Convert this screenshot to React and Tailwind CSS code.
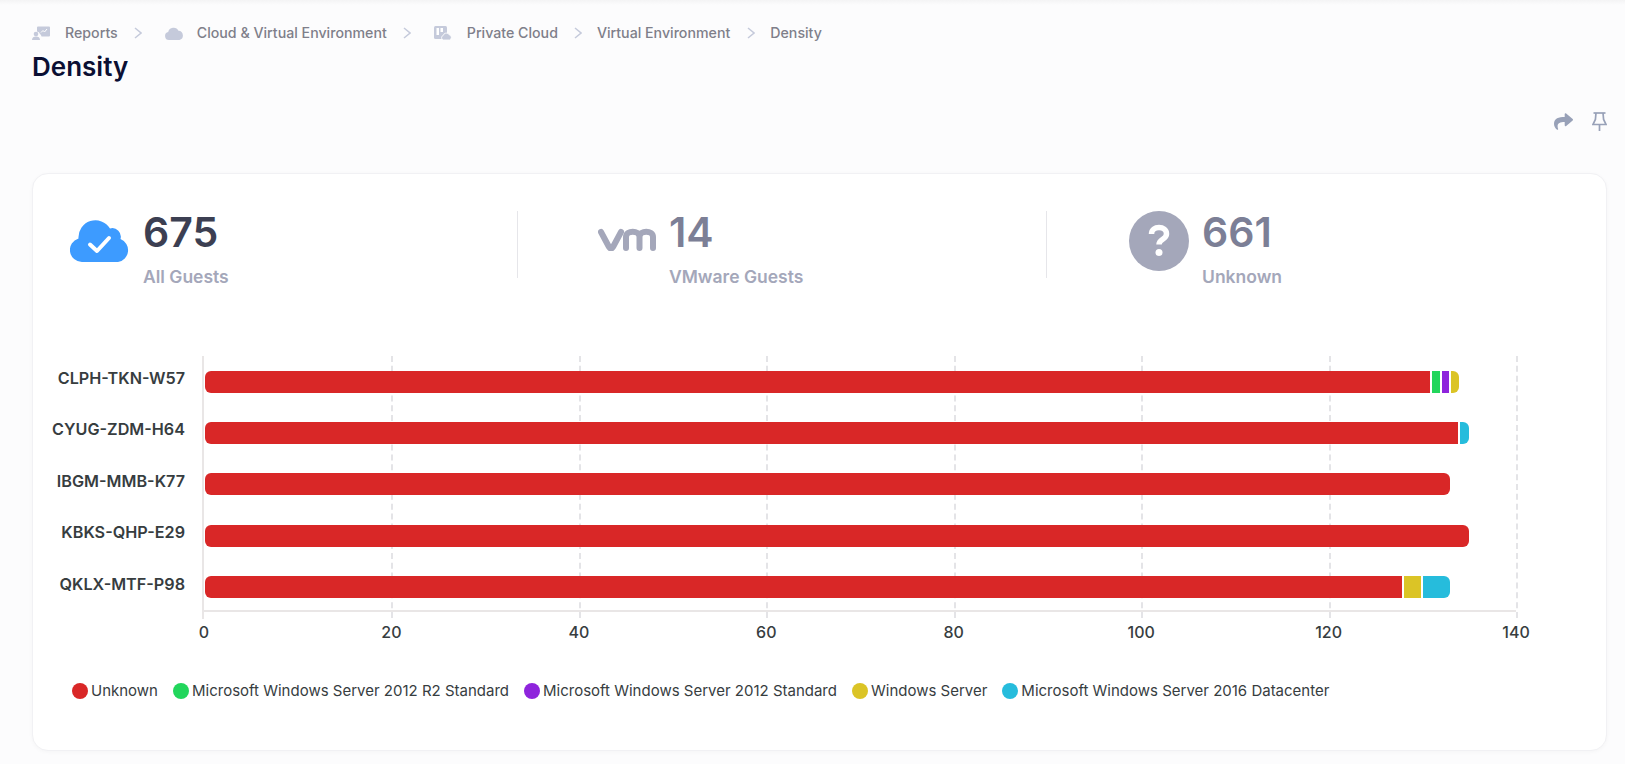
import { FaShare } from "react-icons/fa";

const COLORS = {
  unknown: "#d92727",
  r2: "#22d65c",
  std: "#8e24dc",
  win: "#dbc426",
  dc: "#26bcdc",
};

const ROWS = [
  { name: "CLPH-TKN-W57", parts: [["unknown", 131], ["r2", 1], ["std", 1], ["win", 1]] },
  { name: "CYUG-ZDM-H64", parts: [["unknown", 134], ["dc", 1]] },
  { name: "IBGM-MMB-K77", parts: [["unknown", 133]] },
  { name: "KBKS-QHP-E29", parts: [["unknown", 135]] },
  { name: "QKLX-MTF-P98", parts: [["unknown", 128], ["win", 2], ["dc", 3]] },
];

const TICKS = [0, 20, 40, 60, 80, 100, 120, 140];

const LEGEND = [
  ["unknown", "Unknown"],
  ["r2", "Microsoft Windows Server 2012 R2 Standard"],
  ["std", "Microsoft Windows Server 2012 Standard"],
  ["win", "Windows Server"],
  ["dc", "Microsoft Windows Server 2016 Datacenter"],
];

const ReportsIcon = () => (
  <svg width="18" height="14" viewBox="0 0 18 14" fill="none">
    <path d="M5 1.500A1 1 0 0 1 6 .5h11a1 1 0 0 1 1 1v8a1 1 0 0 1-1 1H9.500a4 4 0 0 0-1.500-2.500A3.500 3.500 0 0 0 5 5.500z" fill="#c5cadb" />
    <path d="M9 6.500l2-2 1.500 1.500 2.500-3" stroke="#fff" strokeWidth="1" />
    <circle cx="4" cy="8" r="2.300" fill="#c5cadb" />
    <path d="M0 14c0-2.400 1.600-3.500 4-3.500s4 1.100 4 3.500z" fill="#c5cadb" />
  </svg>
);

const CloudIcon = () => (
  <svg width="18" height="13" viewBox="0 0 18 13" fill="#c5cadb">
    <path d="M4 13a4 4 0 0 1-.8-7.900A5.500 5.500 0 0 1 13.500 3.800 4.700 4.700 0 0 1 14.500 13z" />
  </svg>
);

const PrivateIcon = () => (
  <svg width="18" height="14" viewBox="0 0 18 14">
    <rect x="0" y="0" width="13" height="13" rx="1.500" fill="#c5cadb" />
    <rect x="2.500" y="2" width="2.500" height="7" fill="#fff" />
    <rect x="6.500" y="2" width="2.500" height="4" fill="#fff" />
    <path d="M9.500 14a2.300 2.300 0 0 1-.3-4.500 3.200 3.200 0 0 1 6-.7A2.700 2.700 0 0 1 15.500 14z" fill="#c5cadb" stroke="#fff" strokeWidth="0.800" />
  </svg>
);

const Chevron = () => (
  <svg width="8" height="12" viewBox="0 0 8 12" fill="none" stroke="#c5cadb" strokeWidth="1.500">
    <path d="M1 1l6 5-6 5" />
  </svg>
);

const PinIcon = () => (
  <svg width="15" height="19" viewBox="0 0 15 19" fill="none" stroke="#98a1b8" strokeWidth="1.700">
    <path d="M1.500 1h12" />
    <path d="M4 1l-.6 6.500L.9 12.500h13.200l-2.500-5L11 1" />
    <path d="M7.500 12.500V19" />
  </svg>
);

const CloudCheck = () => (
  <svg width="60" height="42" viewBox="0 0 60 42">
    <path d="M12 42A12 12 0 0 1 8.500 18.500 17 17 0 0 1 40 8.500 8.500 8.500 0 0 1 50.500 19 12 12 0 0 1 48 42z" fill="#3d9bff" />
    <path d="M20 24.500l7 6.500 12-13" fill="none" stroke="#fff" strokeWidth="4" strokeLinecap="round" strokeLinejoin="round" />
  </svg>
);

const VmLogo = () => (
  <svg width="58" height="24" viewBox="0 0 58 24" fill="none" stroke="#a4a7ba" strokeWidth="6" strokeLinecap="round">
    <path d="M3 5l8 15c1 2 3 2 4 0l8-15" />
    <path d="M28 21V10C28 3 41.500 3 41.500 10V21M41.500 10C41.500 3 55 3 55 10V21" />
  </svg>
);

const QuestionIcon = () => (
  <svg width="60" height="60" viewBox="0 0 60 60">
    <circle cx="30" cy="30" r="30" fill="#a4a7ba" />
    <path d="M22.500 23c0-4.500 3.500-6.500 7.500-6.500s7.500 2.500 7.500 6.500c0 5.500-7.500 5-7.500 10.500" fill="none" stroke="#fff" strokeWidth="5.500" />
    <circle cx="30" cy="41.500" r="3.500" fill="#fff" />
  </svg>
);

const Stat = ({ icon, value, label, valueClass, gap, className }) => (
  <div className={`flex h-[67px] ${className}`}>
    <div className={`flex items-center justify-end ${gap}`}>{icon}</div>
    <div>
      <div className={`text-[41px] leading-[42px] font-semibold ${valueClass}`}>{value}</div>
      <div className="text-[17.500px] leading-6 mt-3 font-semibold text-[#a4a7ba]">{label}</div>
    </div>
  </div>
);

const App = () => {
  return (
    <div className="min-h-[764px] bg-[#fcfcfd] font-['Inter',sans-serif] overflow-hidden">
      <div className="h-[5px] bg-gradient-to-b from-[#f4f4f5] to-[#fcfcfd]" />

      <div className="pl-8 pr-[18px]">
        {/* BREADCRUMB */}
        <div className="flex items-center h-[18px] mt-[19px] text-[14.200px] font-medium text-[#7f7f8a]">
          <ReportsIcon />
          <span className="ml-[15px]">Reports</span>
          <span className="ml-[16px] mr-[23px]"><Chevron /></span>
          <CloudIcon />
          <span className="ml-[14px]">Cloud &amp; Virtual Environment</span>
          <span className="ml-[16px] mr-[23px]"><Chevron /></span>
          <PrivateIcon />
          <span className="ml-[15px]">Private Cloud</span>
          <span className="ml-[16px] mr-[15px]"><Chevron /></span>
          <span>Virtual Environment</span>
          <span className="ml-[17px] mr-[15px]"><Chevron /></span>
          <span>Density</span>
        </div>

        <h1 className="text-[26px] leading-8 mt-[9px] font-semibold text-[#0b0f33]">Density</h1>

        {/* ACTIONS */}
        <div className="flex justify-end items-center gap-[19px] mt-[29px] text-[#98a1b8]">
          <FaShare size={19} />
          <PinIcon />
        </div>

        {/* CARD */}
        <div className="mt-[42px] h-[578px] bg-white rounded-2xl border border-[#f1f1f4] shadow-[0_1px_4px_rgba(0,0,0,0.03)]">
          {/* STATS */}
          <div className="flex pt-[37px] h-[138px]">
            <Stat
              icon={<CloudCheck />}
              value="675"
              label="All Guests"
              valueClass="text-[#3c3f52]"
              gap="w-[110px] pr-[13px] mb-2"
              className="w-[485px] border-r border-[#e6e6ea]"
            />
            <Stat
              icon={<VmLogo />}
              value="14"
              label="VMware Guests"
              valueClass="text-[#7c7f96]"
              gap="w-[151px] pr-[13px] mb-3"
              className="w-[529px] border-r border-[#e6e6ea]"
            />
            <Stat
              icon={<QuestionIcon />}
              value="661"
              label="Unknown"
              valueClass="text-[#7c7f96]"
              gap="w-[155px] pr-[13px] mb-2"
              className=""
            />
          </div>

          {/* CHART */}
          <div className="mt-[44px] flex">
            <div className="w-[152px] shrink-0">
              {ROWS.map((r) => (
                <div key={r.name} className="h-[51.400px] pt-[10px] text-right text-[16.200px] leading-6 font-semibold text-[#373d3f]">
                  {r.name}
                </div>
              ))}
            </div>
            <div className="ml-[17px] w-[1314px] h-[256px] relative border-l-2 border-b-2 border-[#e9e6e6]">
              {TICKS.slice(1).map((t) => (
                <div
                  key={t}
                  className="absolute top-0 bottom-[-8px] border-l-2 border-dashed border-[#e4e4e7]"
                  style={{ left: `${(t / 140) * 100}%` }}
                />
              ))}
              <div className="absolute left-[-2px] bottom-[-9px] h-[9px] border-l-2 border-[#e9e6e6]" />
              {TICKS.map((t) => (
                <div
                  key={t}
                  className="absolute bottom-[-32px] w-10 -ml-5 text-center text-base leading-5 font-medium text-[#373d3f]"
                  style={{ left: `${(t / 140) * 100}%` }}
                >
                  {t}
                </div>
              ))}
              {ROWS.map((r) => (
                <div key={r.name} className="relative h-[51.400px] flex items-center">
                  <div className="flex h-[22px] ml-[1px] rounded-md overflow-hidden">
                    {r.parts.map(([k, v]) => (
                      <div
                        key={k}
                        className="h-full border-l border-r border-white first:border-l-0 last:border-r-0"
                        style={{ width: `${v * 9.36}px`, backgroundColor: COLORS[k] }}
                      />
                    ))}
                  </div>
                </div>
              ))}
            </div>
          </div>

          {/* LEGEND */}
          <div className="flex items-center mt-[68px] ml-[39px] text-[15px] leading-5 text-[#373d3f]">
            {LEGEND.map(([k, label]) => (
              <div key={k} className="flex items-center mr-[15px]">
                <span className="w-4 h-4 rounded-full mr-[3px]" style={{ backgroundColor: COLORS[k] }} />
                {label}
              </div>
            ))}
          </div>
        </div>
      </div>
    </div>
  );
};

export default App;
